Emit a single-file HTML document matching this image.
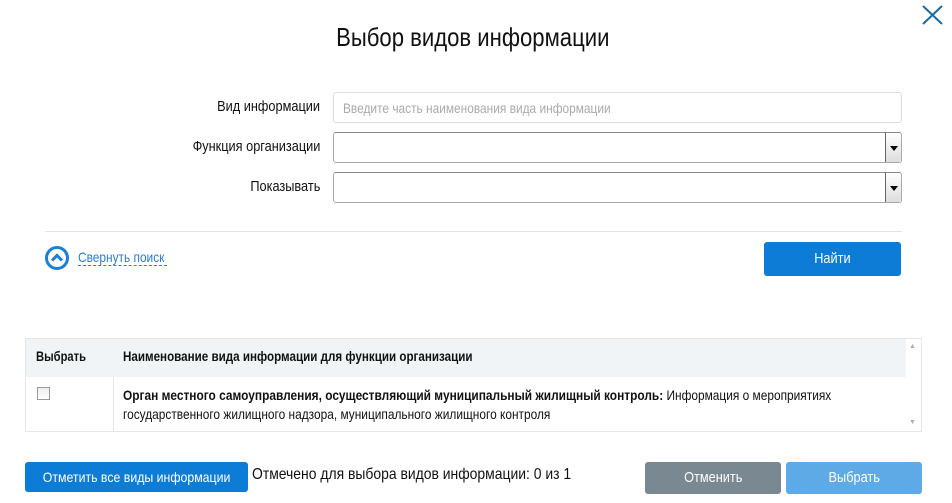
<!DOCTYPE html>
<html><head><meta charset="utf-8"><style>
body{margin:0;width:952px;height:503px;background:#fff;font-family:"Liberation Sans",sans-serif;color:#111;position:relative;overflow:hidden}
.a{position:absolute}
.n{display:inline-block;transform:scaleX(.85);transform-origin:left center;white-space:nowrap}
.r{transform-origin:right center}
.c{transform-origin:center center}
.lbl{position:absolute;right:632px;font-size:15px;text-align:right}
.inp{position:absolute;left:333px;width:567px;height:29px;border:1px solid #ccc;border-radius:3px;background:#fff}
.sel{border-color:#aaa;border-top-color:#888}
.arr{position:absolute;right:0;top:0;width:15px;height:29px;border-left:1px solid #666;background:linear-gradient(#fff,#ddd);border-radius:0 3px 3px 0}
.arr:after{content:"";position:absolute;left:4px;top:13px;border:4px solid transparent;border-top:5px solid #000;border-bottom:0}
.btn{position:absolute;color:#fff;font-size:15px;text-align:center;border-radius:3px}
</style></head><body>
<div class="a" style="left:0;width:946px;top:22px;text-align:center;font-size:26px"><span class="n c">Выбор видов информации</span></div>
<svg class="a" style="left:922px;top:5px" width="21" height="20"><path d="M1 1L20 19M20 1L1 19" stroke="#1a6aa8" stroke-width="2"/></svg>
<div class="lbl" style="top:98px"><span class="n r">Вид информации</span></div>
<div class="lbl" style="top:138px"><span class="n r">Функция организации</span></div>
<div class="lbl" style="top:178px"><span class="n r">Показывать</span></div>
<div class="inp" style="top:92px;border-color:#ddd"><span class="n" style="position:absolute;left:9px;top:7px;font-size:14px;color:#aaa">Введите часть наименования вида информации</span></div>
<div class="inp sel" style="top:132px"><div class="arr"></div></div>
<div class="inp sel" style="top:172px"><div class="arr"></div></div>
<div class="a" style="left:45px;top:231px;width:857px;height:1px;background:#e3e3e3"></div>
<svg class="a" style="left:45px;top:246px" width="24" height="24"><circle cx="12" cy="12" r="10.5" fill="none" stroke="#1a7fd6" stroke-width="3"/><path d="M7 14.5L12 9.5L17 14.5" fill="none" stroke="#1a7fd6" stroke-width="3"/></svg>
<div class="a" style="left:78px;top:249px;width:89px;font-size:14px;color:#2a7ccc;border-bottom:1px dashed #2a7ccc;line-height:16px"><span class="n">Свернуть поиск</span></div>
<div class="btn" style="left:764px;top:242px;width:137px;height:34px;line-height:34px;background:#0d7cd6"><span class="n c">Найти</span></div>
<div class="a" style="left:25px;top:338px;width:895px;height:92px;border:1px solid #e6e6e6;background:#fff"></div>
<div class="a" style="left:26px;top:339px;width:880px;height:38px;background:#f1f4f7"></div>
<div class="a" style="left:113px;top:377px;width:1px;height:54px;background:#e6e6e6"></div>
<div class="a" style="left:36px;top:348px;font-size:14px;line-height:16px;font-weight:bold"><span class="n" style="transform:scaleX(.8)">Выбрать</span></div>
<div class="a" style="left:123px;top:348px;font-size:14px;line-height:16px;font-weight:bold"><span class="n" style="transform:scaleX(.83)">Наименование вида информации для функции организации</span></div>
<div class="a" style="left:37px;top:387px;width:11px;height:11px;border:1px solid #999;background:linear-gradient(#eee,#fff)"></div>
<div class="a" style="left:123px;top:386px;font-size:14px;line-height:19px;width:880px;transform:scaleX(.85);transform-origin:left top"><b>Орган местного самоуправления, осуществляющий муниципальный жилищный контроль:</b> Информация о мероприятиях<br>государственного жилищного надзора, муниципального жилищного контроля</div>
<div class="a" style="left:909px;top:343px;font-size:7px;color:#aaa">▲</div>
<div class="a" style="left:909px;top:419px;font-size:7px;color:#aaa">▼</div>
<div class="btn" style="left:25px;top:462px;width:223px;height:30px;line-height:30px;background:#0d7cd6;font-size:14px"><span class="n c" style="transform:scaleX(.88)">Отметить все виды информации</span></div>
<div class="a" style="left:252px;top:466px;font-size:16px"><span class="n" style="transform:scaleX(.87)">Отмечено для выбора видов информации: 0 из 1</span></div>
<div class="btn" style="left:645px;top:462px;width:136px;height:32px;line-height:32px;background:#7a8891"><span class="n c">Отменить</span></div>
<div class="btn" style="left:786px;top:462px;width:136px;height:32px;line-height:32px;background:#5eaae6"><span class="n c">Выбрать</span></div>
</body></html>
